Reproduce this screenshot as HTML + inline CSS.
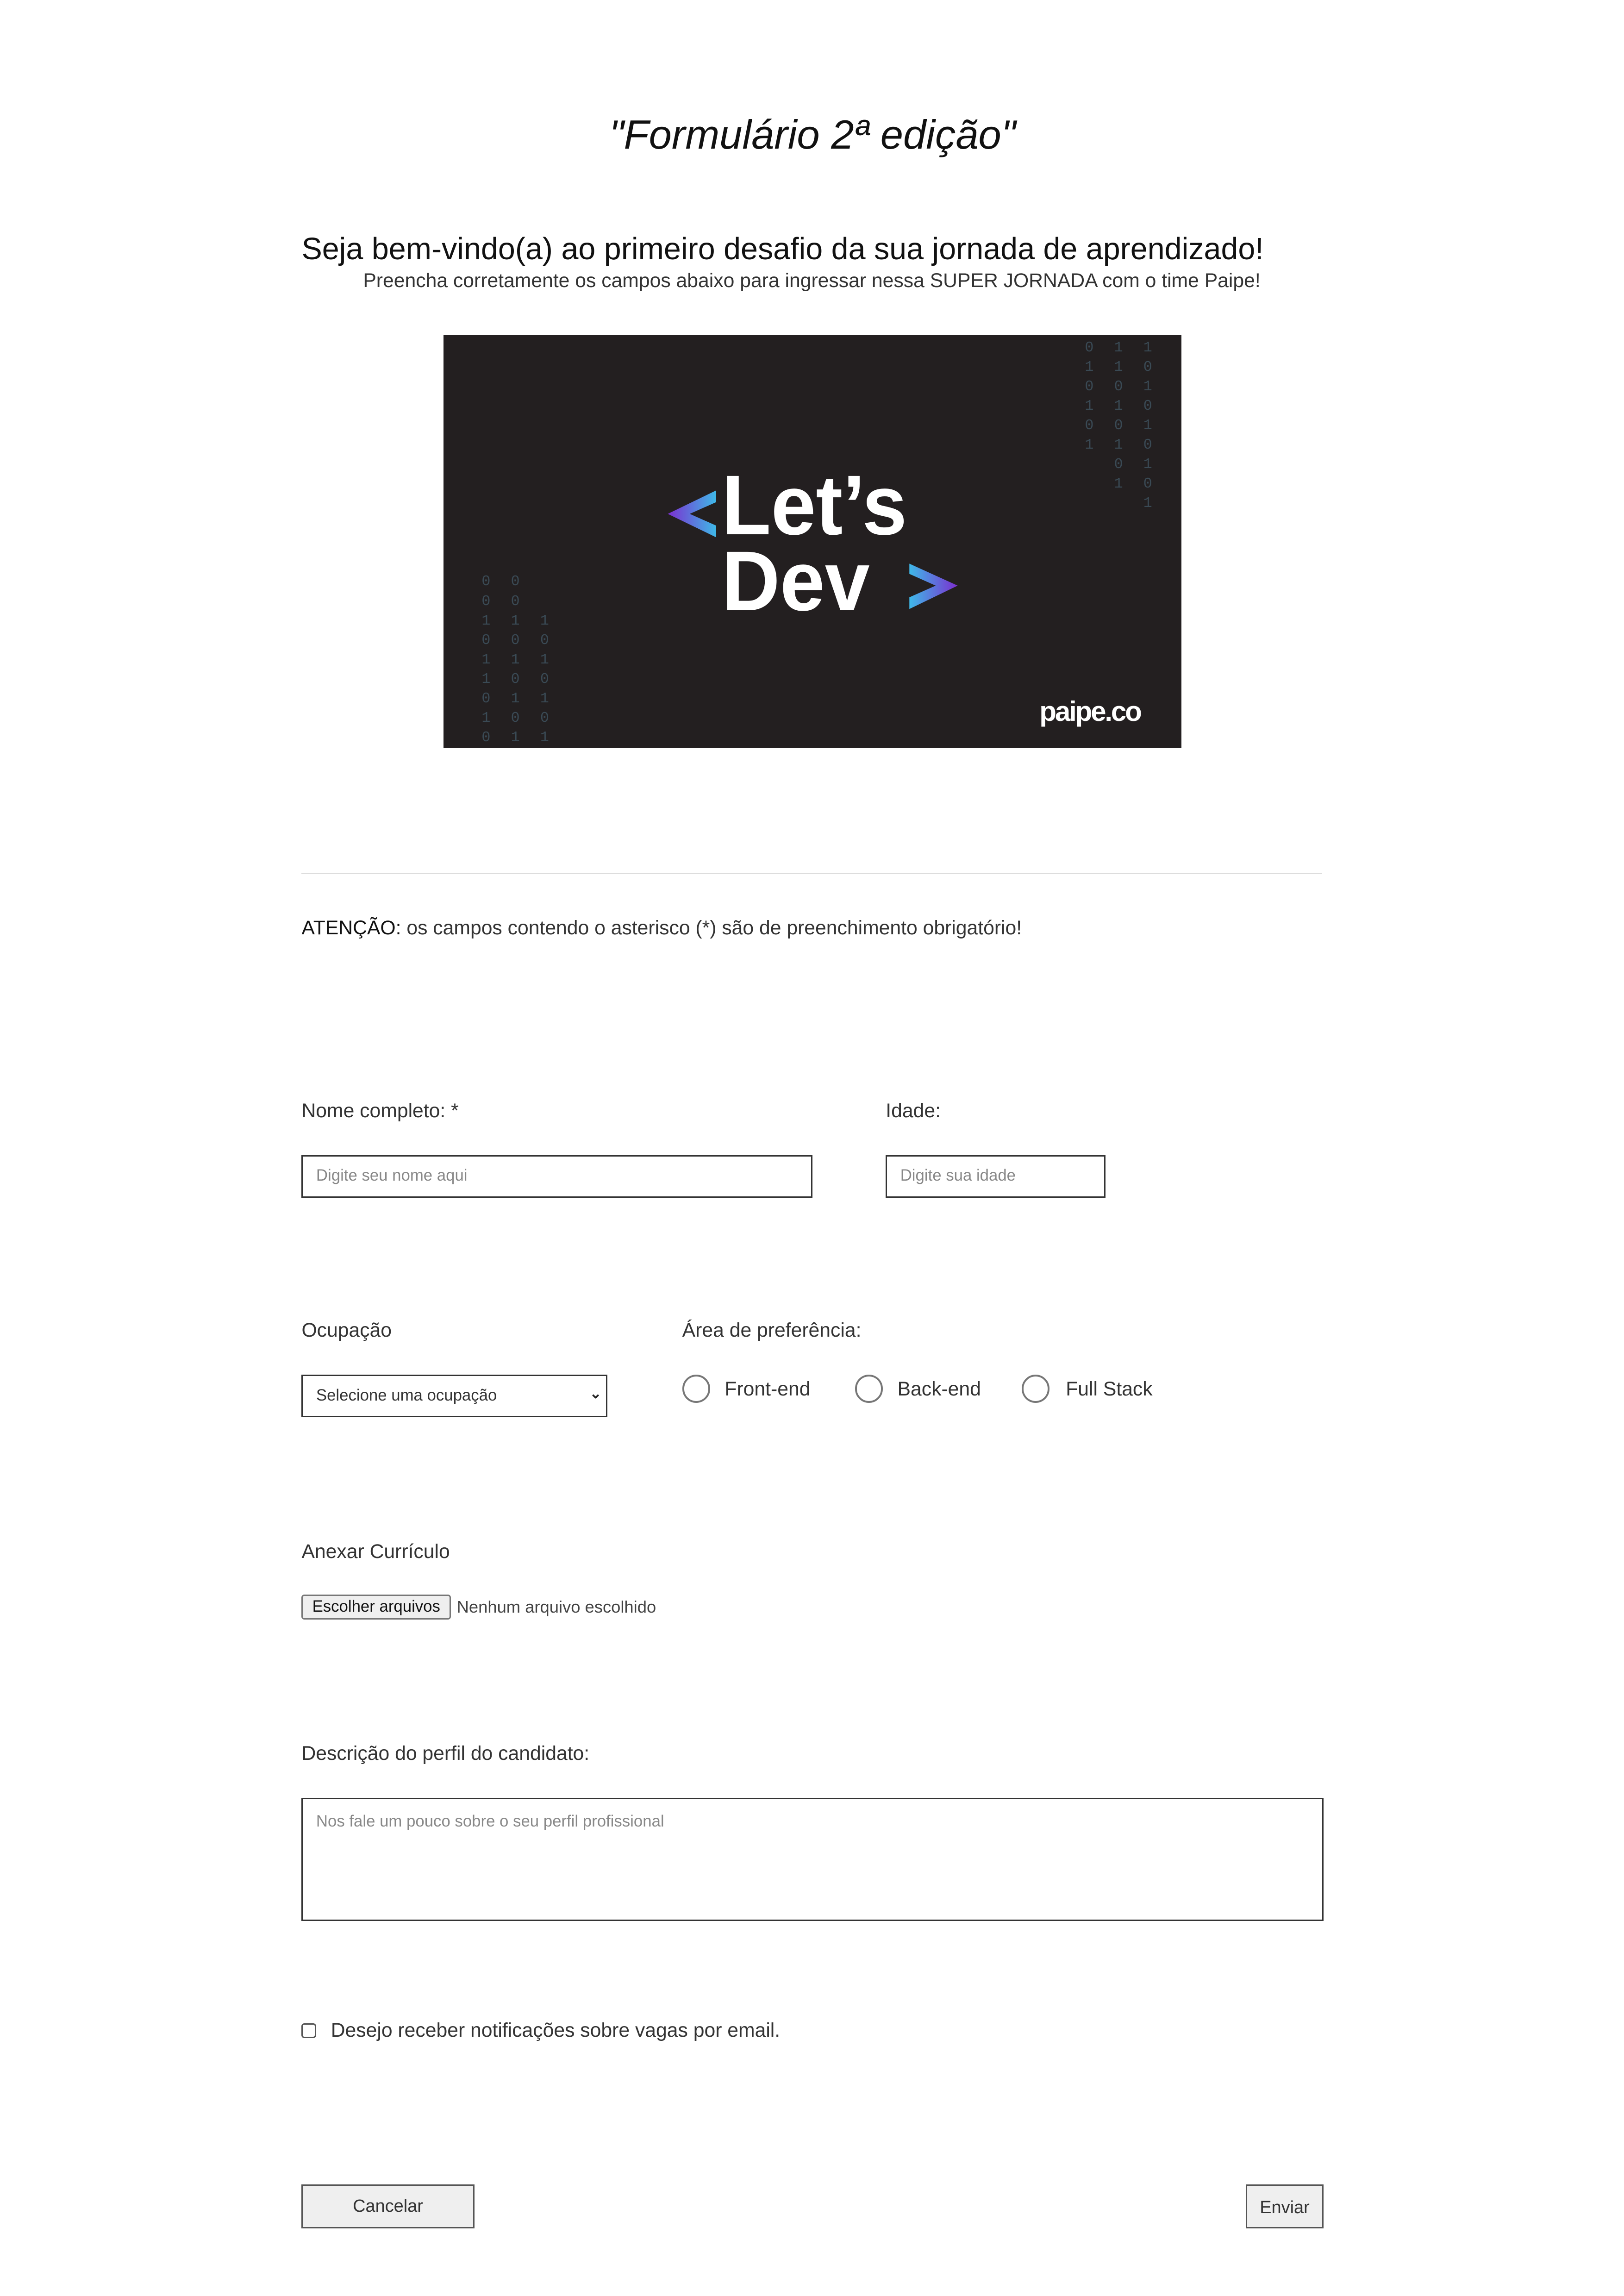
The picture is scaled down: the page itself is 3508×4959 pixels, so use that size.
<!DOCTYPE html>
<html><head><meta charset="utf-8">
<style>
html,body{margin:0;padding:0;background:#fff;}
body{width:3508px;height:4959px;overflow:hidden;}
#w{position:relative;width:1110px;height:1568px;zoom:3.1624;font-family:"Liberation Sans",sans-serif;color:#222;}
.a{position:absolute;white-space:nowrap;}
.lbl{font-size:13.5px;color:#333;}
.box{position:absolute;border:1px solid #333;background:#fff;box-sizing:border-box;}
.ph{font-size:11px;color:#888;position:absolute;left:9px;}
.rad{position:absolute;width:19px;height:19px;border:1.3px solid #777;border-radius:50%;box-sizing:border-box;}
.bin{position:absolute;font-family:"Liberation Mono",monospace;font-size:10px;color:#3a4a55;line-height:13.3px;letter-spacing:4px;white-space:pre;}
</style></head><body><div id="w">
<div class="a" style="left:0;width:1110px;text-align:center;top:76px;font-size:28px;font-style:italic;color:#111;">"Formulário 2ª edição"</div>
<div class="a" style="left:206px;top:158px;font-size:21px;color:#111;">Seja bem-vindo(a) ao primeiro desafio da sua jornada de aprendizado!</div>
<div class="a" style="left:206px;width:697px;text-align:center;top:184px;font-size:13.5px;color:#333;">Preencha corretamente os campos abaixo para ingressar nessa SUPER JORNADA com o time Paipe!</div>
<div class="a" style="left:303px;top:229px;width:504px;height:282px;background:#231f20;overflow:hidden;">
<div class="bin" style="left:438px;top:2px;">0 1 1
1 1 0
0 0 1
1 1 0
0 0 1
1 1 0
  0 1
  1 0
    1</div>
<div class="bin" style="left:26px;top:162px;">0 0
0 0
1 1 1
0 0 0
1 1 1
1 0 0
0 1 1
1 0 0
0 1 1</div>
<svg style="position:absolute;left:150px;top:92px" width="210" height="110">
<defs><linearGradient id="g1" x1="0" y1="0" x2="1" y2="0"><stop offset="0" stop-color="#7b2fd0"/><stop offset="1" stop-color="#3fb8e8"/></linearGradient>
<linearGradient id="g2" x1="0" y1="0" x2="1" y2="0"><stop offset="0" stop-color="#3fb8e8"/><stop offset="1" stop-color="#7b2fd0"/></linearGradient></defs>
<path d="M36 14 L3 30 L36 46 L36 38 L18 30 L36 22Z" fill="url(#g1)"/>
<path d="M168 64 L201 79 L168 95 L168 87 L186 79 L168 71Z" fill="url(#g2)"/>
</svg>
<div class="a" style="left:190px;top:90px;font-size:58px;font-weight:bold;color:#fff;line-height:52px;transform:scaleX(0.95);transform-origin:left;">Let’s<br>Dev</div>
<div class="a" style="left:407px;top:246px;font-size:19px;font-weight:bold;color:#fff;letter-spacing:-1px;">paipe.co</div>
</div>
<div class="a" style="left:206px;top:596px;width:697px;height:1px;background:#ddd;"></div>
<div class="a lbl" style="left:206px;top:626px;"><span style="color:#111">ATENÇÃO:</span> os campos contendo o asterisco (*) são de preenchimento obrigatório!</div>
<div class="a lbl" style="left:206px;top:751px;">Nome completo: *</div>
<div class="a lbl" style="left:605px;top:751px;">Idade:</div>
<div class="box" style="left:206px;top:789px;width:349px;height:29px;"><span class="ph" style="top:7px">Digite seu nome aqui</span></div>
<div class="box" style="left:605px;top:789px;width:150px;height:29px;"><span class="ph" style="top:7px">Digite sua idade</span></div>
<div class="a lbl" style="left:206px;top:901px;">Ocupação</div>
<div class="a lbl" style="left:466px;top:901px;">Área de preferência:</div>
<div class="box" style="left:206px;top:939px;width:209px;height:29px;"><span class="ph" style="top:7px;color:#333">Selecione uma ocupação</span><span style="position:absolute;right:3px;top:6px;font-size:10px;font-weight:bold;">&#8964;</span></div>
<div class="rad" style="left:466px;top:939px;"></div><div class="a lbl" style="left:495px;top:941px;">Front-end</div>
<div class="rad" style="left:584px;top:939px;"></div><div class="a lbl" style="left:613px;top:941px;">Back-end</div>
<div class="rad" style="left:698px;top:939px;"></div><div class="a lbl" style="left:728px;top:941px;">Full Stack</div>
<div class="a lbl" style="left:206px;top:1052px;">Anexar Currículo</div>
<div class="a" style="left:206px;top:1089px;width:102px;height:17px;border:1px solid #777;border-radius:2px;background:#efefef;box-sizing:border-box;font-size:11px;color:#111;text-align:center;line-height:15px;">Escolher arquivos</div>
<div class="a" style="left:312px;top:1091px;font-size:11.5px;color:#444;">Nenhum arquivo escolhido</div>
<div class="a lbl" style="left:206px;top:1190px;">Descrição do perfil do candidato:</div>
<div class="box" style="left:206px;top:1228px;width:698px;height:84px;"><span class="ph" style="top:9px">Nos fale um pouco sobre o seu perfil profissional</span></div>
<div class="a" style="left:206px;top:1382px;width:10px;height:10px;border:1px solid #555;border-radius:2px;box-sizing:border-box;"></div>
<div class="a lbl" style="left:226px;top:1379px;">Desejo receber notificações sobre vagas por email.</div>
<div class="box" style="left:206px;top:1492px;width:118px;height:30px;background:#efefef;border-color:#555;font-size:12px;color:#333;text-align:center;line-height:28px;">Cancelar</div>
<div class="box" style="left:851px;top:1492px;width:53px;height:30px;background:#efefef;border-color:#555;font-size:12px;color:#333;text-align:center;line-height:30px;">Enviar</div>
</div></body></html>
